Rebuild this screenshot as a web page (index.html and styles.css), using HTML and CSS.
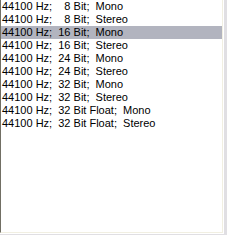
FILE: index.html
```
<!DOCTYPE html>
<html lang="en">
<head>
<meta charset="utf-8"/>
<title>Formats</title>
<link rel="stylesheet" href="styles.css">
</head>
<body>
<div class="listbox">
  <div class="listbox-inner">
    <div class="item">44100 Hz;    8 Bit;  Mono</div>
    <div class="item">44100 Hz;    8 Bit;  Stereo</div>
    <div class="item selected">44100 Hz;  16 Bit;  Mono</div>
    <div class="item">44100 Hz;  16 Bit;  Stereo</div>
    <div class="item">44100 Hz;  24 Bit;  Mono</div>
    <div class="item">44100 Hz;  24 Bit;  Stereo</div>
    <div class="item">44100 Hz;  32 Bit;  Mono</div>
    <div class="item">44100 Hz;  32 Bit;  Stereo</div>
    <div class="item">44100 Hz;  32 Bit Float;  Mono</div>
    <div class="item">44100 Hz;  32 Bit Float;  Stereo</div>
  </div>
</div>
</body>
</html>
```
FILE: styles.css
```
body {
  margin: 0;
  background-color: #e0dfe3;
  font-family: 'Liberation Sans', Arial, sans-serif;
  font-size: 11px;
}

.listbox {
  width: 223px;
  height: 233px;
  border-right: 1px solid #ffffff;
  border-bottom: 1px solid #ffffff;
  background-color: #ffffff;
}

.listbox-inner {
  height: 232px;
  border-left: 1px solid #716f64;
  border-right: 1px solid #f1efe2;
  border-bottom: 1px solid #f1efe2;
}

.item {
  height: 13px;
  line-height: 13px;
  padding-left: 1px;
  white-space: pre;
  color: #000000;
}

.item.selected {
  background-color: #b2b4bf;
}
```
